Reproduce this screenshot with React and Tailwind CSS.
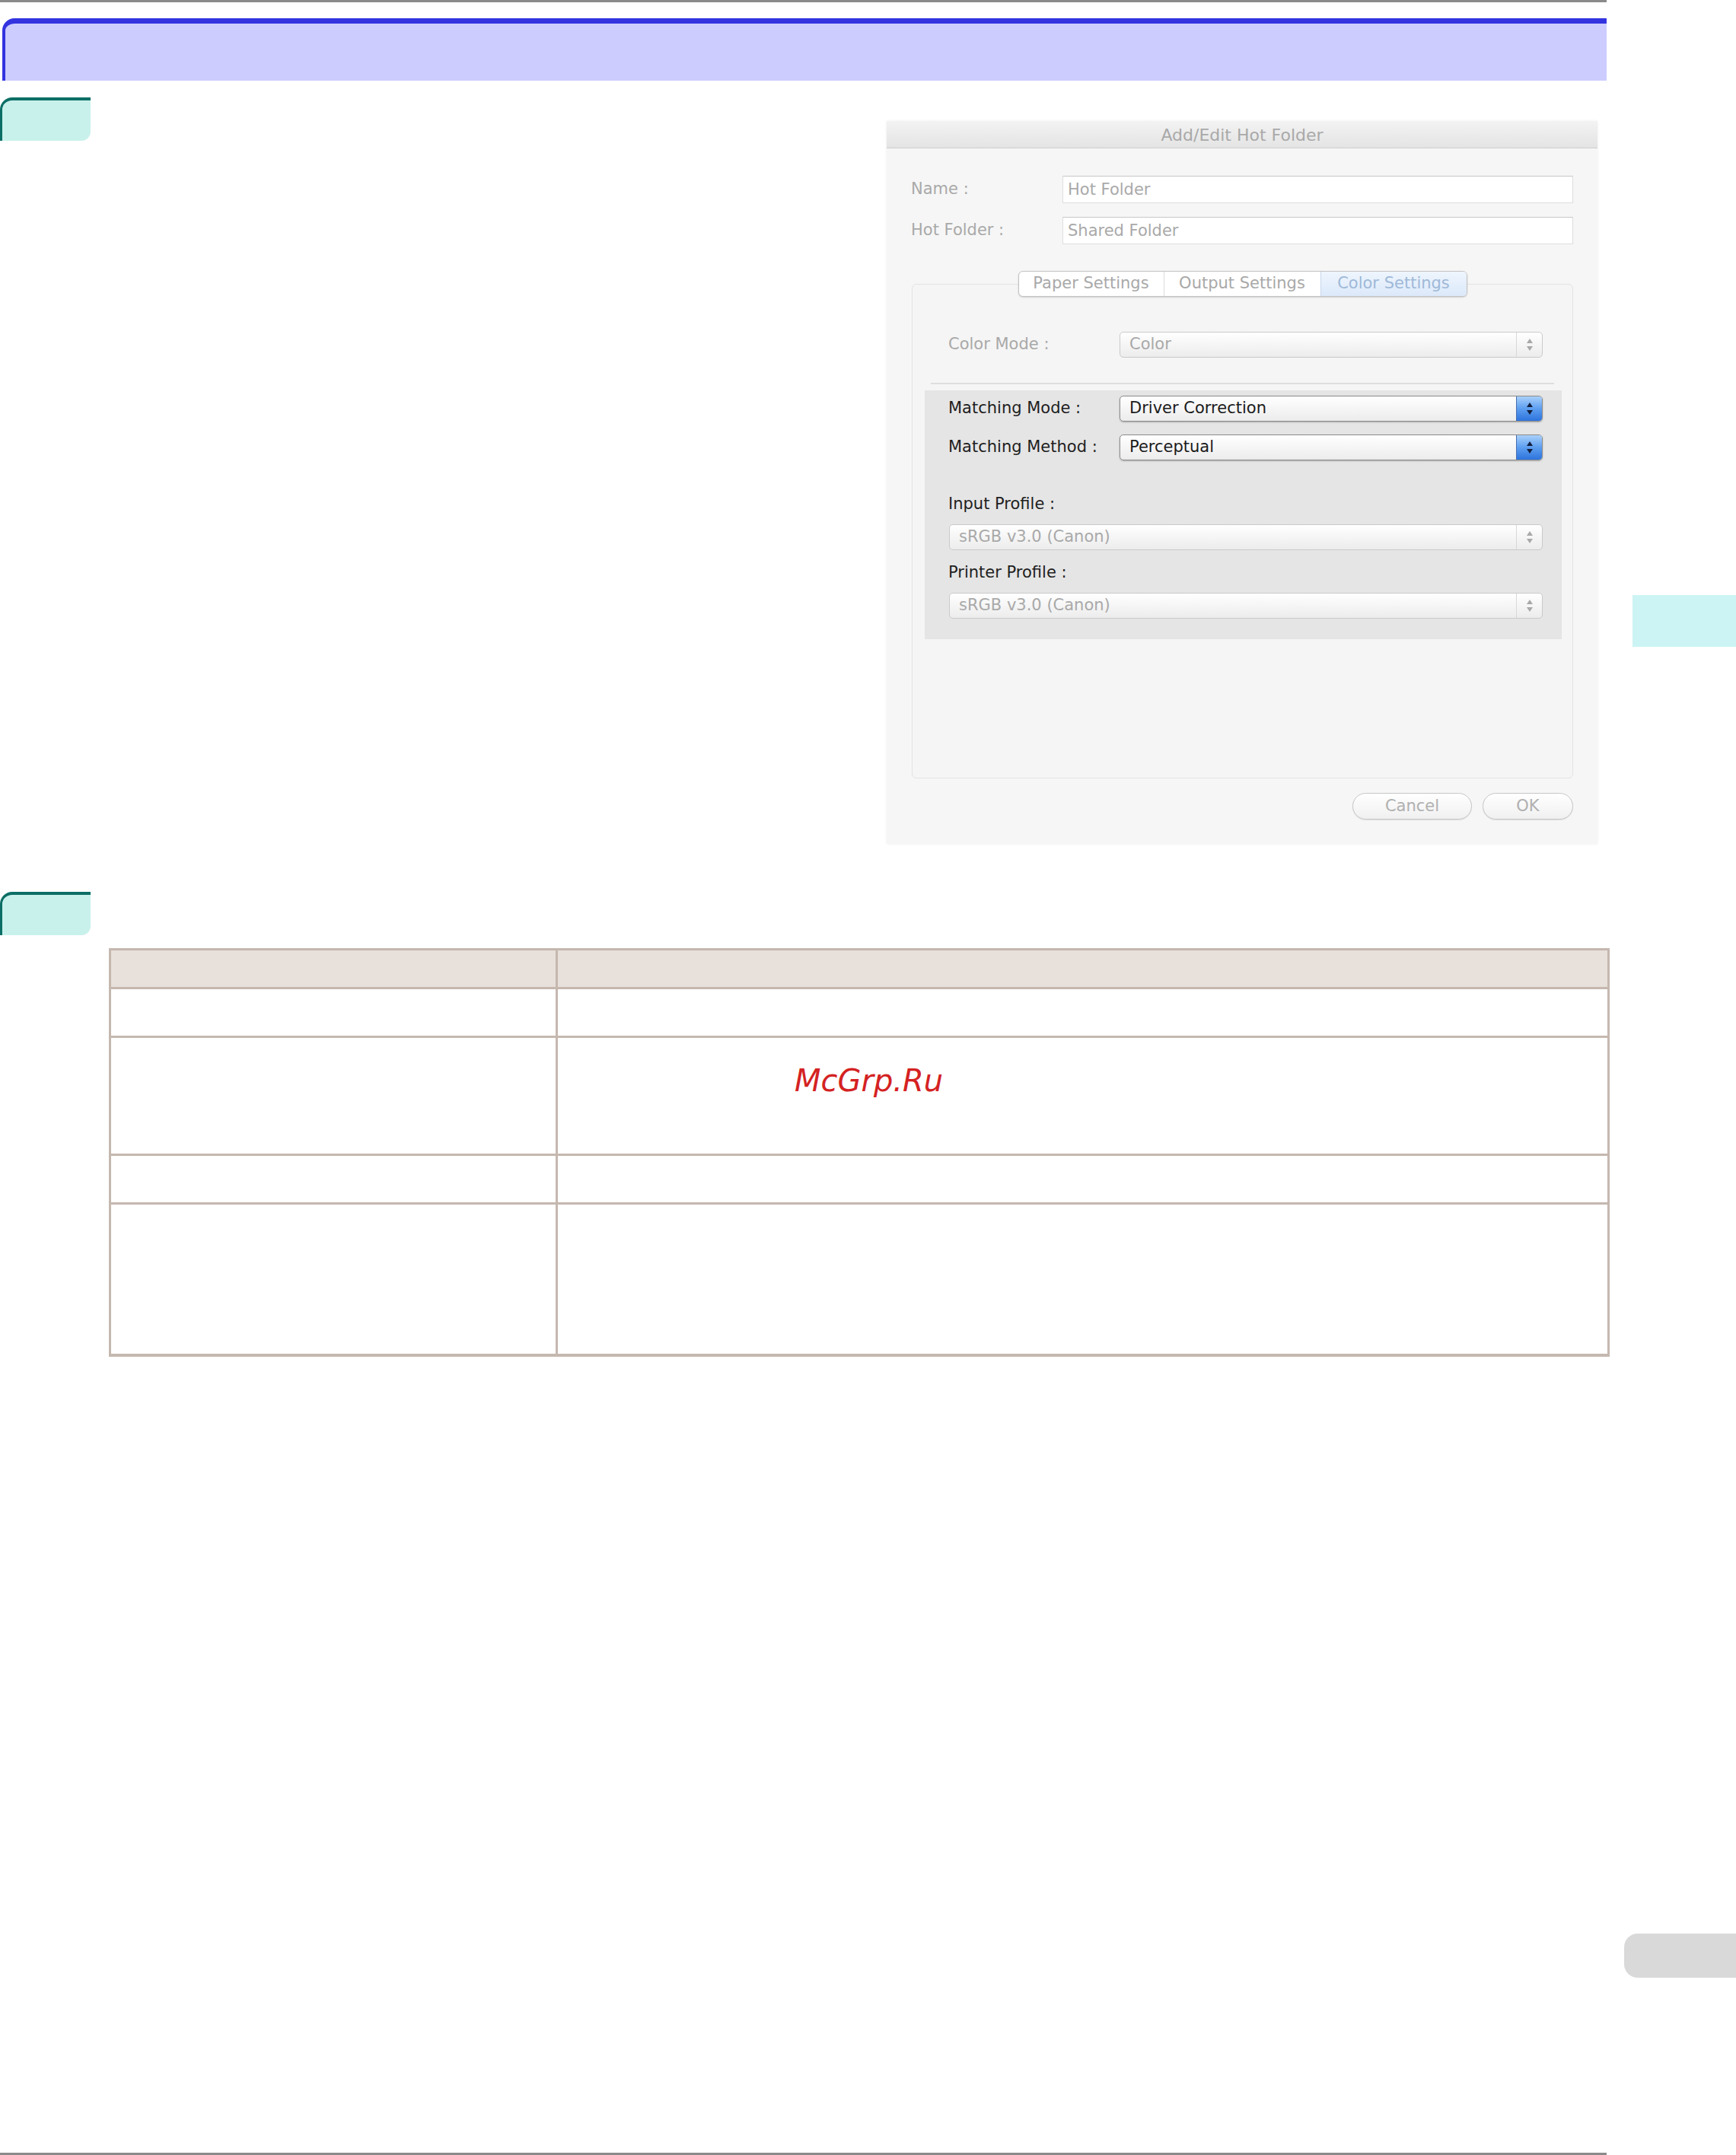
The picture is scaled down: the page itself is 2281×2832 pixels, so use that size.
import React from 'react';

function Arrows({ enabled }) {
  const fill = enabled ? '#13203f' : '#a8a8a8';
  return (
    <svg width="10" height="20" viewBox="0 0 10 20">
      <polygon points="5,2 9,8 1,8" fill={fill} />
      <polygon points="1,12 9,12 5,18" fill={fill} />
    </svg>
  );
}

function Select({ value, enabled, className }) {
  return (
    <div
      className={`flex h-[34px] rounded-[5px] border overflow-hidden bg-linear-to-b from-white to-[#ececec] ${
        enabled ? 'border-[#8c8c8c] shadow-[0_1px_2px_rgba(0,0,0,0.25)]' : 'border-[#cacaca]'
      } ${className}`}
    >
      <span className={`flex-1 flex items-center pl-[12px] text-[21px] ${enabled ? 'text-[#1b1b1b]' : 'text-[#a9a9a9]'}`}>
        {value}
      </span>
      <span
        className={`w-[34px] flex items-center justify-center border-l ${
          enabled ? 'border-[#4a6fb0] bg-linear-to-b from-[#a9d0fa] via-[#5c9ef0] to-[#2d73dc]' : 'border-[#d8d8d8]'
        }`}
      >
        <Arrows enabled={enabled} />
      </span>
    </div>
  );
}

function Field({ value }) {
  return (
    <div className="flex-1 h-[36px] bg-white border border-[#dedede] border-t-[#c8c8c8] flex items-center pl-[6px] pt-[2px] text-[21px] text-[#a9a9a9]">
      {value}
    </div>
  );
}

function GreenTab() {
  return (
    <div className="w-[119px] h-[57px] bg-[#c9f1ec] border-t-[4px] border-l-[3px] border-[#0c6f66] rounded-tl-[16px] rounded-br-[12px]" />
  );
}

function Dialog() {
  return (
    <div className="w-[934px] h-[950px] bg-[#f6f6f6] flex flex-col font-['DejaVu_Sans',sans-serif] shadow-[0_0_3px_rgba(0,0,0,0.08)]">
      <div className="h-[36px] shrink-0 border-b border-[#cfcfcf] bg-linear-to-b from-[#f3f3f3] to-[#e4e4e4] flex items-center justify-center pt-[2px] text-[22px] text-[#a9a9a9]">
        Add/Edit Hot Folder
      </div>
      <div className="px-[32px] flex flex-col">
        <div className="mt-[36px] flex items-center">
          <span className="w-[199px] text-[21px] text-[#a9a9a9]">Name :</span>
          <Field value="Hot Folder" />
        </div>
        <div className="mt-[18px] flex items-center">
          <span className="w-[199px] text-[21px] text-[#a9a9a9]">Hot Folder :</span>
          <Field value="Shared Folder" />
        </div>

        <div className="mt-[52px] ml-[1px] h-[650px] border border-[#e3e3e3] rounded-[6px] bg-[#f5f5f5] flex flex-col">
          <div className="-mt-[18px] mx-auto w-[590px] h-[34px] flex rounded-[6px] border border-[#c2c2c2] bg-white shadow-[0_1px_2px_rgba(0,0,0,0.15)] overflow-hidden text-[21px]">
            <span className="w-[191px] flex items-center justify-center text-[#a9a9a9] border-r border-[#dcdcdc]">Paper Settings</span>
            <span className="w-[206px] flex items-center justify-center text-[#a9a9a9] border-r border-[#c7d6ea]">Output Settings</span>
            <span className="flex-1 flex items-center justify-center text-[#9fb9d8] bg-linear-to-b from-[#eef5fd] to-[#dce9fa]">Color Settings</span>
          </div>

          <div className="mt-[46px] pl-[47px] flex items-center">
            <span className="w-[225px] text-[21px] text-[#a9a9a9]">Color Mode :</span>
            <Select value="Color" className="w-[556px]" />
          </div>

          <div className="mt-[33px] mx-[24px] h-[2px] bg-[#dedede]" />

          <div className="mt-[8px] ml-[16px] w-[837px] h-[327px] bg-[#e5e5e5] flex flex-col pt-[7px]">
            <div className="pl-[31px] flex items-center">
              <span className="w-[225px] text-[21px] text-[#1e1e1e]">Matching Mode :</span>
              <Select value="Driver Correction" enabled className="w-[556px]" />
            </div>
            <div className="mt-[17px] pl-[31px] flex items-center">
              <span className="w-[225px] text-[21px] text-[#1e1e1e]">Matching Method :</span>
              <Select value="Perceptual" enabled className="w-[556px]" />
            </div>
            <div className="mt-[45px] pl-[31px] h-[26px] flex items-center text-[21px] text-[#1e1e1e]">Input Profile :</div>
            <Select value="sRGB v3.0 (Canon)" className="mt-[13px] ml-[32px] w-[780px]" />
            <div className="mt-[17px] pl-[31px] h-[26px] flex items-center text-[21px] text-[#1e1e1e]">Printer Profile :</div>
            <Select value="sRGB v3.0 (Canon)" className="mt-[13px] ml-[32px] w-[780px]" />
          </div>
        </div>

        <div className="mt-[19px] flex justify-end gap-[14px]">
          <button className="w-[157px] h-[35px] rounded-full border border-[#c6c6c6] bg-linear-to-b from-white to-[#f0f0f0] text-[21px] text-[#b0b0b0] shadow-[0_1px_1px_rgba(0,0,0,0.1)]">
            Cancel
          </button>
          <button className="w-[119px] h-[35px] rounded-full border border-[#c6c6c6] bg-linear-to-b from-white to-[#f0f0f0] text-[21px] text-[#b0b0b0] shadow-[0_1px_1px_rgba(0,0,0,0.1)]">
            OK
          </button>
        </div>
      </div>
    </div>
  );
}

const rows = [
  { h: 'h-[64px]', mark: false },
  { h: 'h-[155px]', mark: true },
  { h: 'h-[64px]', mark: false },
  { h: 'h-[199px]', mark: false },
];

function InfoTable() {
  return (
    <div className="w-[1972px] border-[3px] border-b-[4px] border-[#c5b8af] flex flex-col">
      <div className="h-[48px] flex bg-[#e8e0da]">
        <div className="w-[587px] border-r-[3px] border-[#c5b8af]" />
        <div className="flex-1" />
      </div>
      {rows.map((r, i) => (
        <div key={i} className={`${r.h} flex border-t-[3px] border-[#c5b8af]`}>
          <div className="w-[587px] border-r-[3px] border-[#c5b8af]" />
          <div className="flex-1">
            {r.mark && (
              <div className="mt-[36px] ml-[311px] text-[40px] italic text-[#d42222] font-['DejaVu_Sans',sans-serif] leading-none">
                McGrp.Ru
              </div>
            )}
          </div>
        </div>
      ))}
    </div>
  );
}

export default function App() {
  return (
    <div className="w-[2281px] h-[2832px] bg-white flex overflow-hidden">
      <div className="w-[2120px] shrink-0 flex flex-col">
        <div className="w-[2111px] h-[3px] bg-[#8a8a8a]" />
        <div className="mt-[21px] ml-[3px] w-[2108px] h-[82px] bg-[#ccccff] border-t-[7px] border-l-[4px] border-[#3333e0] rounded-tl-[16px]" />

        <div className="mt-[22px] flex items-start">
          <GreenTab />
          <div className="ml-[1046px] mt-[31px]">
            <Dialog />
          </div>
        </div>

        <div className="mt-[63px]">
          <GreenTab />
        </div>

        <div className="mt-[17px] ml-[143px]">
          <InfoTable />
        </div>

        <div className="mt-auto w-[2111px] h-[3px] bg-[#8a8a8a]" />
      </div>

      <div className="flex-1 flex flex-col">
        <div className="mt-[782px] ml-[25px] h-[68px] bg-[#ccf4f4]" />
        <div className="mt-[1691px] ml-[14px] h-[58px] bg-[#d9d9d9] rounded-l-[18px]" />
      </div>
    </div>
  );
}
